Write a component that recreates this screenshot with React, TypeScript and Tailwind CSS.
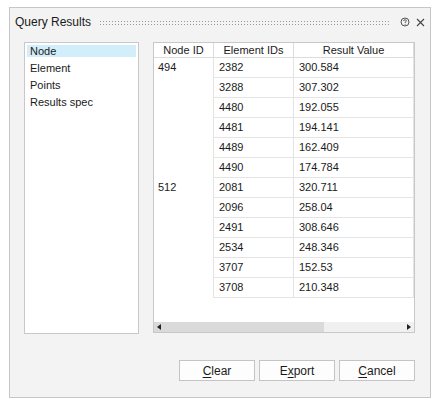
import React from "react";

const rows: [string, string, string][] = [
  ["494", "2382", "300.584"],
  ["", "3288", "307.302"],
  ["", "4480", "192.055"],
  ["", "4481", "194.141"],
  ["", "4489", "162.409"],
  ["", "4490", "174.784"],
  ["512", "2081", "320.711"],
  ["", "2096", "258.04"],
  ["", "2491", "308.646"],
  ["", "2534", "248.346"],
  ["", "3707", "152.53"],
  ["", "3708", "210.348"],
];

const Grip = () => (
  <svg width="291" height="8" className="block shrink-0">
    <defs>
      <pattern id="dots" width="3" height="3" patternUnits="userSpaceOnUse">
        <rect x="0" y="0" width="1" height="1" fill="#9a9a9a" />
      </pattern>
    </defs>
    <rect x="0" y="1" width="291" height="6" fill="url(#dots)" />
  </svg>
);

const Btn = ({ pre, u, post }: { pre: string; u: string; post: string }) => (
  <button className="w-[76px] h-[21px] border border-[#c4c4c4] bg-[#fdfdfd] text-[12px] text-[#1a1a1a] leading-none">
    {pre}
    <span className="underline underline-offset-2">{u}</span>
    {post}
  </button>
);

export default function App() {
  return (
    <div className="w-[441px] h-[412px] bg-white pt-[7px] pl-[9px] font-['Liberation_Sans',Arial,sans-serif] text-[#1a1a1a]">
      <div className="w-[422px] h-[391px] border border-[#c6c6c6] bg-[#f3f3f3] flex flex-col">
        {/* title bar */}
        <div className="h-[28px] flex items-center pl-[5px] pr-[8px]">
          <span className="text-[12px] w-[85px] shrink-0 whitespace-nowrap">Query Results</span>
          <Grip />
          <svg width="10" height="10" viewBox="0 0 10 10" className="ml-[9px] shrink-0">
            <circle cx="5" cy="5" r="4" fill="none" stroke="#555" strokeWidth="1" />
            <path d="M3.6 4 Q3.6 2.7 5 2.7 Q6.4 2.7 6.4 3.9 Q6.4 4.6 5.2 5.1 L5.2 6" fill="none" stroke="#555" strokeWidth="0.9" />
            <circle cx="5.2" cy="7.2" r="0.55" fill="#555" />
          </svg>
          <svg width="9" height="9" viewBox="0 0 9 9" className="ml-[6px] shrink-0">
            <path d="M1 1 L8 8 M8 1 L1 8" stroke="#444" strokeWidth="1.1" />
          </svg>
        </div>

        {/* body */}
        <div className="flex gap-[14px] pl-[14px] pt-[6px]">
          <div className="w-[115px] h-[292px] border border-[#c8c8c8] bg-white p-[2px] text-[11px]">
            <div className="h-[12px] bg-[#d3eefb] pl-[3px] leading-[12px]">Node</div>
            <div className="pl-[3px] mt-[5px] leading-[12px]">Element</div>
            <div className="pl-[3px] mt-[5px] leading-[12px]">Points</div>
            <div className="pl-[3px] mt-[5px] leading-[12px]">Results spec</div>
          </div>

          <div className="w-[262px] h-[291px] border border-[#c8c8c8] bg-white flex flex-col text-[11px]">
            <div className="flex-1">
              <div className="flex h-[15px] border-b border-[#dcdcdc] leading-[14px]">
                <div className="w-[60px] text-center border-r border-[#dcdcdc]">Node ID</div>
                <div className="w-[80px] text-center border-r border-[#dcdcdc]">Element IDs</div>
                <div className="w-[120px] text-center border-r border-[#dcdcdc]">Result Value</div>
              </div>
              {rows.map((r, i) => (
                <div key={i} className="flex h-[20px] leading-[19px]">
                  <div className="w-[60px] pl-[4px] border-r border-[#e4e4e4]">{r[0]}</div>
                  <div className="w-[80px] pl-[5px] border-r border-b border-[#e4e4e4]">{r[1]}</div>
                  <div className="w-[120px] pl-[5px] border-r border-b border-[#e4e4e4]">{r[2]}</div>
                </div>
              ))}
            </div>
            <div className="h-[10px] flex bg-[#f0f0f0] items-center">
              <div className="w-[170px] h-full bg-[#dadada] flex items-center pl-[3px]">
                <svg width="4" height="6" viewBox="0 0 4 6">
                  <path d="M4 0 L0 3 L4 6 Z" fill="#222" />
                </svg>
              </div>
              <div className="flex-1" />
              <svg width="4" height="6" viewBox="0 0 4 6" className="mr-[3px]">
                <path d="M0 0 L4 3 L0 6 Z" fill="#222" />
              </svg>
            </div>
          </div>
        </div>

        {/* buttons */}
        <div className="flex justify-end gap-[4px] pr-[15px] mt-[26px]">
          <Btn pre="" u="C" post="lear" />
          <Btn pre="E" u="x" post="port" />
          <Btn pre="" u="C" post="ancel" />
        </div>
      </div>
    </div>
  );
}
